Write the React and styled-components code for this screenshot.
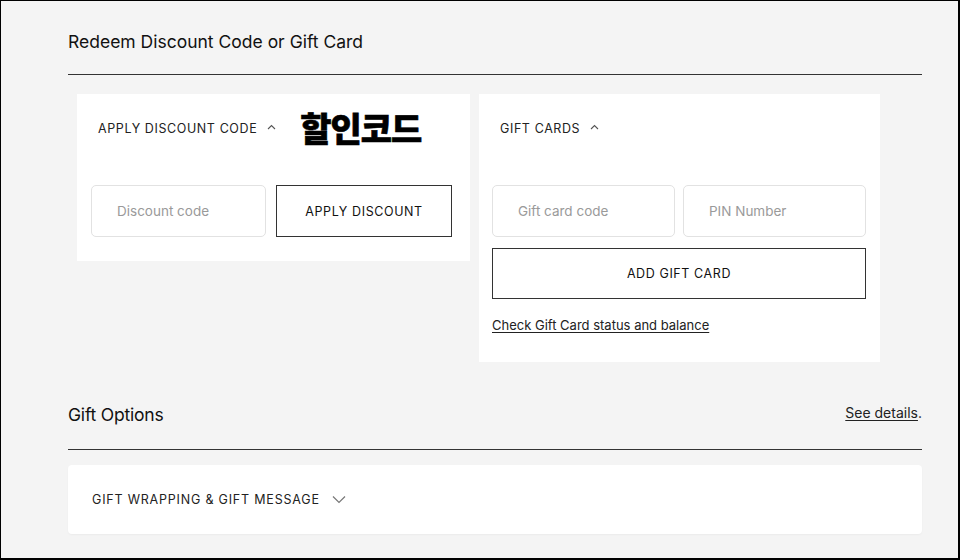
import React from 'react';
import styled, { createGlobalStyle } from 'styled-components';

const GlobalStyle = createGlobalStyle`
    html, body {
        margin: 0;
        padding: 0;
        background: #f4f4f4;
    }
    body {
        font-family: Inter, "Liberation Sans", Arial, sans-serif;
        color: #111;
    }
`;

const Frame = styled.div`
    box-sizing: border-box;
    width: 960px;
    height: 560px;
    border: 1px solid #000;
    border-right-width: 2px;
    border-bottom-width: 2px;
    background: #f4f4f4;
    padding: 0 36px 0 67px;
    overflow: hidden;
`;

const SectionHead = styled.div`
    display: flex;
    align-items: flex-start;
    justify-content: space-between;
    height: ${p => p.$h}px;
    border-bottom: 1.5px solid #333;
    box-sizing: border-box;
    padding-top: ${p => p.$pt || 0}px;
`;

const SectionTitle = styled.h2`
    margin: 0;
    font-size: ${p => p.$size || 17.5}px;
    line-height: 22px;
    font-weight: 400;
    letter-spacing: ${p => p.$ls || 0}px;
    color: #111;
`;

const DetailsLink = styled.span`
    font-size: 14px;
    line-height: 22px;
    color: #222;
    margin-top: -2px;
    a {
        color: inherit;
        text-decoration: underline;
        text-underline-offset: 2px;
    }
`;

const CardRow = styled.div`
    display: grid;
    grid-template-columns: 393px 401px;
    gap: 9px;
    align-items: start;
    padding: 19px 9px 0;
`;

const Card = styled.div`
    background: #fff;
`;

const CardHeader = styled.div`
    display: flex;
    align-items: center;
    gap: 10px;
    height: 68px;
    padding-left: 21px;
    font-size: 12.5px;
    letter-spacing: 0.6px;
    color: #222;
`;

const Caret = styled.svg`
    width: 9px;
    height: 6px;
    margin-top: -2px;
`;

const Korean = styled.span`
    font-family: "Noto Sans CJK KR", sans-serif;
    font-weight: 900;
    font-size: 34px;
    letter-spacing: -1px;
    color: #000;
    margin-left: 14px;
    line-height: 1;
    -webkit-text-stroke: 0.6px #000;
`;

const CardBody = styled.div`
    display: grid;
    grid-template-columns: ${p => p.$cols};
    gap: ${p => p.$gap}px;
    padding: 23px ${p => p.$pr}px ${p => p.$pb}px ${p => p.$pl}px;
`;

const Input = styled.input`
    box-sizing: border-box;
    height: 52px;
    width: 100%;
    border: 1.5px solid #e2e2e2;
    border-radius: 5px;
    padding: 0 0 0 25px;
    font-family: inherit;
    font-size: 13.5px;
    background: #fff;
    outline: none;
    &::placeholder {
        color: #9a9a9a;
    }
`;

const OutlineButton = styled.button`
    box-sizing: border-box;
    height: ${p => p.$h || 52}px;
    width: 100%;
    border: 1.5px solid #333;
    border-radius: 0;
    background: #fff;
    font-family: inherit;
    font-size: 12.5px;
    letter-spacing: 0.6px;
    color: #111;
    grid-column: ${p => (p.$full ? '1 / -1' : 'auto')};
    margin-top: ${p => p.$mt || 0}px;
`;

const CheckLink = styled.a`
    grid-column: 1 / -1;
    margin-top: 9px;
    font-size: 13px;
    line-height: 18px;
    color: #222;
    text-decoration: underline;
    text-underline-offset: 2px;
`;

const WrapCard = styled.div`
    display: flex;
    align-items: center;
    gap: 12px;
    height: 69px;
    margin-top: 15px;
    padding-left: 24px;
    background: #fff;
    border-radius: 4px;
    box-shadow: 0 1px 2px rgba(0, 0, 0, 0.04);
    font-size: 12.5px;
    letter-spacing: 0.8px;
    color: #222;
`;

function CaretUp() {
    return (
        <Caret viewBox="0 0 9 6">
            <path d="M1 5 L4.5 1.5 L8 5" fill="none" stroke="#555" strokeWidth="1.1" />
        </Caret>
    );
}

function ChevronDown() {
    return (
        <svg width="14" height="9" viewBox="0 0 14 9">
            <path d="M1 1.5 L7 7.5 L13 1.5" fill="none" stroke="#777" strokeWidth="1.2" />
        </svg>
    );
}

export default function App() {
    return (
        <>
            <GlobalStyle />
            <Frame>
                <SectionHead $h={74} $pt={30}>
                    <SectionTitle>Redeem Discount Code or Gift Card</SectionTitle>
                </SectionHead>

                <CardRow>
                    <Card>
                        <CardHeader>
                            APPLY DISCOUNT CODE <CaretUp />
                            <Korean>할인코드</Korean>
                        </CardHeader>
                        <CardBody $cols="175px 176px" $gap={10} $pl={14} $pr={18} $pb={24}>
                            <Input placeholder="Discount code" />
                            <OutlineButton>APPLY DISCOUNT</OutlineButton>
                        </CardBody>
                    </Card>

                    <Card>
                        <CardHeader>
                            GIFT CARDS <CaretUp />
                        </CardHeader>
                        <CardBody $cols="183px 183px" $gap={8} $pl={13} $pr={14} $pb={28}>
                            <Input placeholder="Gift card code" />
                            <Input placeholder="PIN Number" />
                            <OutlineButton $full $h={51} $mt={3}>ADD GIFT CARD</OutlineButton>
                            <CheckLink href="#">Check Gift Card status and balance</CheckLink>
                        </CardBody>
                    </Card>
                </CardRow>

                <SectionHead $h={88} $pt={42}>
                    <SectionTitle $ls={-0.2}>Gift Options</SectionTitle>
                    <DetailsLink><a href="#">See details</a>.</DetailsLink>
                </SectionHead>

                <WrapCard>
                    GIFT WRAPPING &amp; GIFT MESSAGE <ChevronDown />
                </WrapCard>
            </Frame>
        </>
    );
}
